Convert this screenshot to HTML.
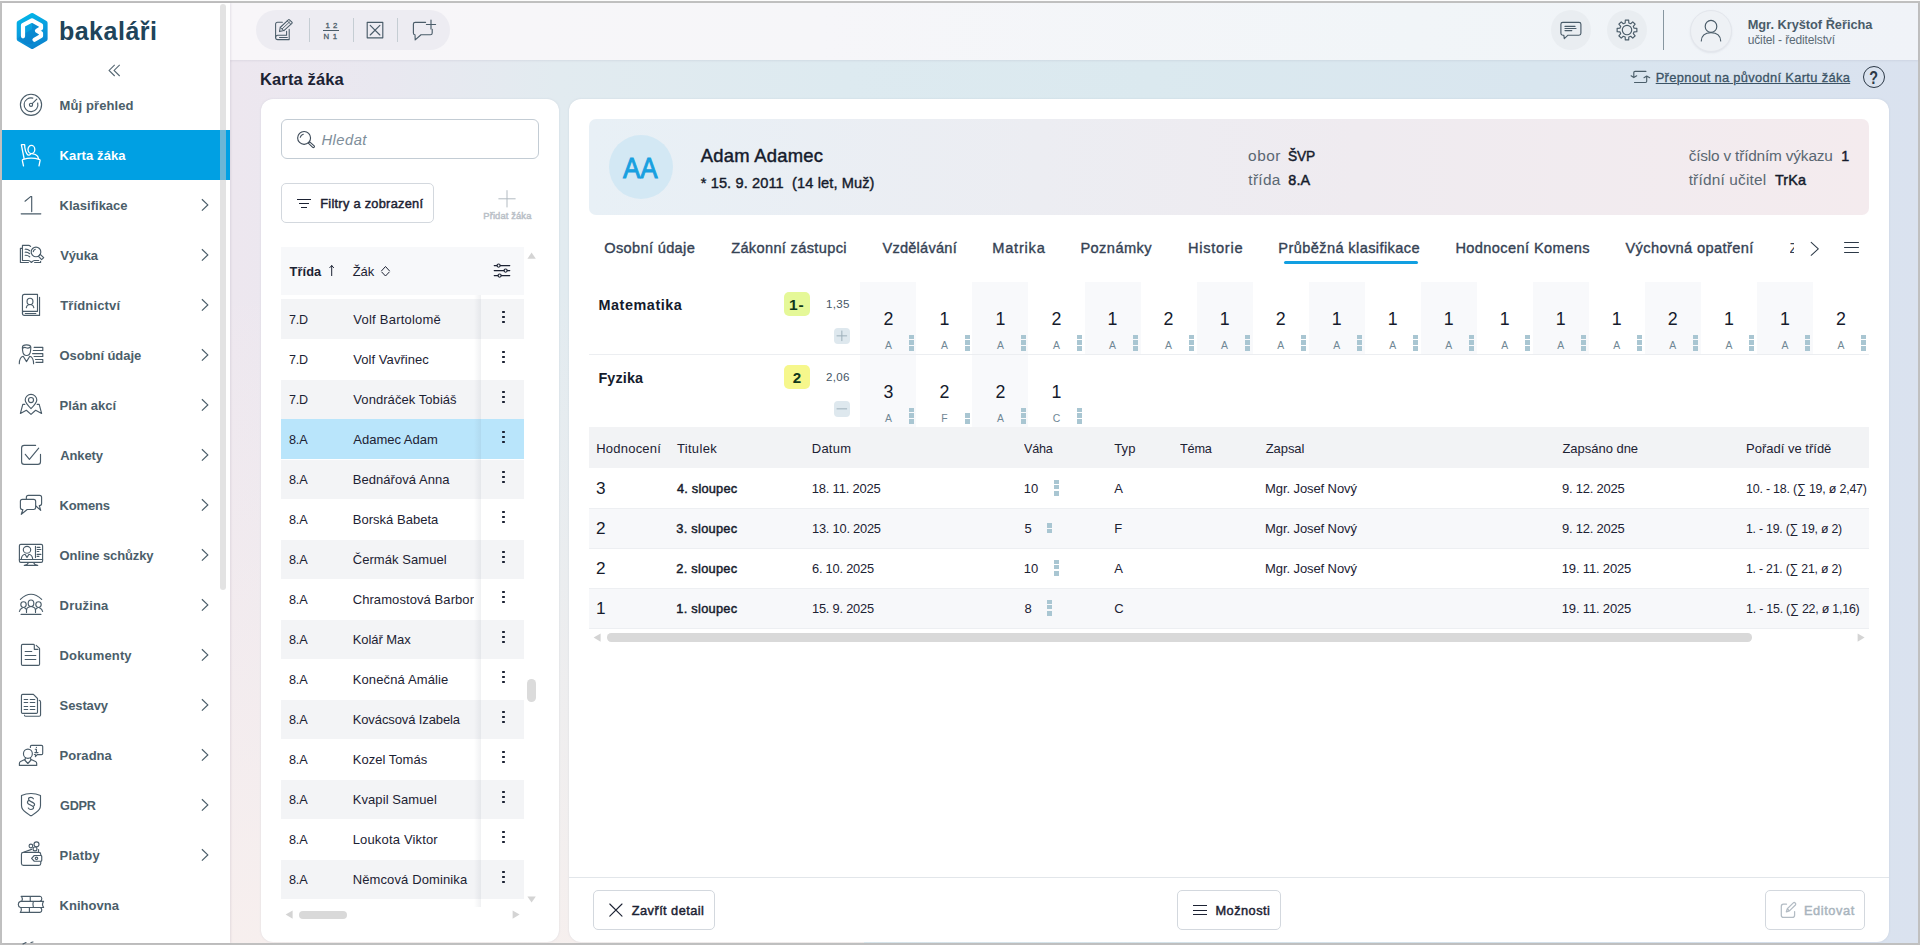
<!DOCTYPE html>
<html lang="cs"><head><meta charset="utf-8"><title>Karta žáka – Bakaláři</title>
<style>
*{box-sizing:border-box;margin:0;padding:0}
html,body{width:1920px;height:945px;overflow:hidden}
body{position:relative;font-family:"Liberation Sans",sans-serif;color:#1c2233;background:#c0c0c0}
.a{position:absolute}
.t{position:absolute;white-space:pre;line-height:20px;height:20px}
svg{position:absolute;overflow:visible}
.ic{fill:none;stroke:#4a5c69;stroke-width:1.15;stroke-linecap:round;stroke-linejoin:round}
.icw{fill:none;stroke:#fff;stroke-width:1.3;stroke-linecap:round;stroke-linejoin:round}
.btn{position:absolute;background:#fff;border:1px solid #d3d8de;border-radius:5px}

</style></head>
<body>
<div class="a" style="left:0;top:0;width:1920px;height:1px;background:#fcfcfc"></div>
<div class="a" id="bg" style="left:2px;top:3px;width:1916px;height:940px;background:linear-gradient(180deg,rgba(247,239,238,0) 0%,rgba(247,239,238,.0) 30%,rgba(248,240,238,.9) 100%) 0 0/45% 100% no-repeat,linear-gradient(90deg,#ede7ef 12%,#e9e8f0 20%,#e2ebf0 29%,#ddeaf0 44%,#dbe9ef 60%,#d9e6ef 80%,#dae2ef 100%)"></div>
<header id="app-topbar">
<div class="a" id="topbar" style="left:230px;top:3px;width:1688px;height:57px;background:linear-gradient(90deg,#f8f6f9 0%,#f6f6f9 35%,#f1f5f8 70%,#f0f3f8 100%);box-shadow:0 1px 2px rgba(120,120,150,.13)"></div>
<div class="a" style="left:256px;top:10px;width:194px;height:40px;border-radius:20px;background:#edecf2"></div>
<div class="a" style="left:309px;top:18px;width:1px;height:24px;background:#c5cdd3"></div>
<div class="a" style="left:353px;top:18px;width:1px;height:24px;background:#c5cdd3"></div>
<div class="a" style="left:397px;top:18px;width:1px;height:24px;background:#c5cdd3"></div>
<svg class="ic" style="left:271px;top:18px;stroke-width:1.05" width="24" height="24" viewBox="0 0 24 24"><path d="M11.400 4.300 H6.600 Q4.600 4.300 4.600 6.300 V19.400 Q4.600 21.600 6.800 21.600 H18.200 V11.200"/><path d="M4.600 19.400 Q4.600 17.300 6.800 17.300 H15.600 V13.300"/><path d="M8.500 19.400 H16.300"/><path d="M8.500 13.600 L9.200 9.500 L17.300 1.800 Q17.900 1.200 18.500 1.800 L20.900 4.200 Q21.500 4.800 20.900 5.400 L12.900 12.600 Z"/><path d="M9.200 9.500 L12.900 12.600 M11.100 10.900 L18.600 3.900 M16.200 2.900 L19.800 6.200" stroke-width=".9"/></svg>
<span class="t" style="left:325.57px;top:16.00px;font-size:7.8px;color:#4a5c69;letter-spacing:0.512px;-webkit-text-stroke:.3px #4a5c69;">1 2</span>
<div class="a" style="left:323px;top:29.700px;width:16.300px;height:1.100px;background:#4a5c69"></div>
<span class="t" style="left:323.57px;top:27.00px;font-size:7.8px;color:#4a5c69;letter-spacing:0.680px;-webkit-text-stroke:.3px #4a5c69;">N 1</span>
<svg class="ic" style="left:363px;top:18px;stroke-width:1.15" width="24" height="24" viewBox="0 0 24 24"><rect x="4.200" y="4.300" width="15.600" height="15.500"/><path d="M7.200 7.300 l9.700 9.700 M16.900 7.300 l-9.700 9.700"/></svg>
<svg class="ic" style="left:411px;top:18px;stroke-width:1.15" width="26" height="24" viewBox="0 0 26 24"><path d="M14.600 4.300 h-10.400 q-1.800 0-1.800 1.800 v8.800 q0 1.800 1.600 1.800 l.2 5.200 l5.800-5.200 h9.400 q1.800 0 1.800-1.800 v-3.600"/><path d="M15.400 6.500 h9.200 M20 2 v9"/></svg>
<div class="a" style="left:1551px;top:10px;width:40px;height:40px;border-radius:50%;background:#e9edf1"></div>
<div class="a" style="left:1607px;top:10px;width:40px;height:40px;border-radius:50%;background:#e9edf1"></div>
<svg class="ic" style="left:1559px;top:18px;stroke-width:1.15" width="24" height="24" viewBox="0 0 24 24"><path d="M3.800 4.300 h16.200 q1.900 0 1.900 1.900 v9.100 q0 1.900-1.900 1.900 h-11 l-3.700 3.400 l-.5-3.400 h-1 q-1.900 0-1.900-1.900 v-9.100 q0-1.900 1.900-1.900z"/><path d="M6 8.400 h10 M6 10.500 h11 M6 12.600 h6.800"/></svg>
<svg class="ic" style="left:1615px;top:18px;stroke-width:1.15" width="24" height="24" viewBox="0 0 24 24"><path d="M10.19 4.93 L10.31 2.14 L13.69 2.14 L13.81 4.93 L15.72 5.72 L17.77 3.83 L20.17 6.23 L18.28 8.28 L19.07 10.19 L21.86 10.31 L21.86 13.69 L19.07 13.81 L18.28 15.72 L20.17 17.77 L17.77 20.17 L15.72 18.28 L13.81 19.07 L13.69 21.86 L10.31 21.86 L10.19 19.07 L8.28 18.28 L6.23 20.17 L3.83 17.77 L5.72 15.72 L4.93 13.81 L2.14 13.69 L2.14 10.31 L4.93 10.19 L5.72 8.28 L3.83 6.23 L6.23 3.83 L8.28 5.72 Z" stroke-linejoin="round"/><circle cx="12" cy="12" r="4.700"/></svg>
<div class="a" style="left:1663px;top:10px;width:1px;height:40px;background:#8796a0"></div>
<div class="a" style="left:1690px;top:10px;width:42px;height:42px;border-radius:50%;background:#eef1f5;border:1px solid #e3e6ec;box-shadow:0 1px 2px rgba(100,110,130,.12)"></div>
<svg class="ic" style="left:1699px;top:18px;stroke-width:1.15" width="24" height="26" viewBox="0 0 24 26"><ellipse cx="12" cy="8.400" rx="5.800" ry="6"/><path d="M2.300 23 q.3-8.300 9.700-8.300 q9.400 0 9.700 8.300"/></svg>
<span class="t" style="left:1747.70px;top:15.00px;font-size:12.8px;font-weight:bold;color:#4a5c69;letter-spacing:-0.020px;">Mgr. Kryštof Řeřicha</span>
<span class="t" style="left:1747.74px;top:30.00px;font-size:12px;color:#5b6b76;letter-spacing:-0.142px;">učitel - ředitelství</span>
<span class="t" style="left:259.99px;top:69.00px;font-size:16.5px;font-weight:bold;letter-spacing:0.139px;">Karta žáka</span>
<svg class="ic" style="left:1630px;top:68px;stroke:#4b5e6a;stroke-width:1.15" width="22" height="18" viewBox="0 0 22 18"><path d="M15.900 3.400 H5 Q3.800 3.400 3.800 4.600 V9.400 M1.100 7.800 L3.800 9.600 L6.700 7.800"/><path d="M4.500 14.500 H15.500 Q16.700 14.500 16.700 13.300 V8.200 M14 9.700 L16.700 8 L19.700 9.700"/></svg>
<span class="t" style="left:1655.69px;top:68.00px;font-size:12.9px;color:#3b5365;letter-spacing:0.319px;text-decoration:underline;text-underline-offset:.7px;text-decoration-thickness:1px;-webkit-text-stroke:.3px #3b5365;">Přepnout na původní Kartu žáka</span>
<div class="a" style="left:1862.800px;top:65.750px;width:22.200px;height:22.200px;border-radius:50%;border:1.200px solid #2c3947"></div>
<span class="t" style="left:1868.28px;top:68.00px;font-size:18.4px;font-weight:bold;color:#2c3947;transform:scaleX(.78);transform-origin:50% 50%;">?</span>
</header>
<nav id="app-sidebar" aria-label="Hlavní menu">
<div class="a" id="sidebar" style="left:2px;top:3px;width:228px;height:940px;background:#fff;box-shadow:1px 0 2px rgba(110,100,130,.14)"></div>
<div class="a" style="left:2px;top:130px;width:228px;height:50px;background:#00a0e3"></div>
<svg style="left:12px;top:10px" width="40" height="42" viewBox="12 10 40 42"><defs><linearGradient id="lg" gradientUnits="userSpaceOnUse" x1="-6" y1="-18" x2="6" y2="18"><stop offset="0" stop-color="#00b7e9"/><stop offset=".45" stop-color="#0a9fdf"/><stop offset="1" stop-color="#0a80cc"/></linearGradient></defs>
<g transform="translate(32.150 31) scale(1 1.034)"><polygon points="0.00,-15.30 13.25,-7.65 13.25,7.65 0.00,15.30 -13.25,7.65 -13.25,-7.65" fill="url(#lg)" stroke="url(#lg)" stroke-width="4.400" stroke-linejoin="round"/></g>
<path d="M20.500 36 L32 29.300 L32 22 L38.500 26.500 L36 31 L39 35.500 L32 44 L26 44 L17.500 39z" fill="#0a74c4" opacity=".4"/>
<path d="M23 36.300 L23 25.200 L32 20.300 L41 25.300 L41 28.200 L37 30.800 L41 33.300 L41 36 L34.500 39.800" fill="none" stroke="#fff" stroke-width="4.200" stroke-linecap="round" stroke-linejoin="round"/></svg>
<span class="t" style="left:58.92px;top:21.00px;font-size:25px;font-weight:bold;color:#20445a;letter-spacing:0.511px;">bakaláři</span>
<svg class="ic" style="left:107px;top:63px;stroke:#566773;stroke-width:1.1" width="14" height="14"><path d="M7.700 1.900 L2.100 7.450 L7.700 13 M12.700 1.900 L7.100 7.450 L12.700 13" stroke-linecap="butt" stroke-linejoin="miter"/></svg>
<svg class="ic" style="left:19px;top:93px" width="24" height="24" viewBox="0 0 24 24"><circle cx="12" cy="11.8" r="10.6"/><path d="M18.7 10 A6.9 6.9 0 1 1 13.8 5.1"/><circle cx="12" cy="11.8" r="1.6"/><path d="M13.2 10.6 L17.8 6.1"/></svg>
<span class="t" style="left:59.58px;top:96.00px;font-size:13px;font-weight:bold;color:#4b5e6a;letter-spacing:0.104px;">Můj přehled</span>
<svg class="icw" style="left:19px;top:143px" width="24" height="24" viewBox="0 0 24 24"><ellipse cx="12.4" cy="6.5" rx="3.4" ry="4.1"/><path d="M5.1 15.500 L2.400 2 Q2.400 1.600 2.800 1.600 L5.300 1.600 Q5.700 1.600 5.700 2 L5.800 4.500 Q6.200 8 7.800 10.600 Q9 12.600 10.500 12 Q11.300 11.600 11.900 10.700"/><path d="M13 10.600 Q17 11 18.500 13.200 Q19.300 14.500 19.400 15.900"/><path d="M4.500 22.800 L3.300 17.400 Q3.200 16.600 4.200 16.300 Q12.200 13.800 20.200 16.300 Q21.200 16.600 21.100 17.400 L20 22.800"/></svg>
<span class="t" style="left:59.58px;top:146.00px;font-size:13px;font-weight:bold;color:#fff;letter-spacing:0.105px;">Karta žáka</span>
<svg class="ic" style="left:19px;top:193px" width="24" height="24" viewBox="0 0 24 24"><path d="M6 8.200 l5.6-4.600 h1.100 v15"/><path d="M2.200 20.800 h19.600"/></svg>
<span class="t" style="left:59.58px;top:196.00px;font-size:13px;font-weight:bold;color:#4b5e6a;letter-spacing:0.006px;">Klasifikace</span>
<svg class="ic" style="left:199px;top:195px;stroke:#4b5e6a;stroke-width:1.2" width="12" height="20"><path d="M2.900 4.200 L8.800 9.900 L2.900 15.600" stroke-linecap="butt" stroke-linejoin="miter"/></svg>
<svg class="ic" style="left:19px;top:243px" width="24" height="24" viewBox="0 0 24 24"><path d="M3.300 5.300 H1.400 V19.500 H9.400 M15.600 19.500 H21.600 V18.200"/><path d="M11.600 3.500 Q10.800 2.400 9.600 2.400 H3.450 V17.500 H9.300 Q10.600 17.500 12.400 19.500 Q14.200 17.500 15.500 17.500 H19.700"/><path d="M6.200 6.200 Q8.600 6 10.700 7.700 M6.200 9.200 Q8.600 9 10.700 10.700 M6.200 12.300 Q8.600 12.100 10.700 13.800"/><circle cx="17" cy="8.900" r="4.800"/><path d="M14.300 8.600 A2.900 2.900 0 0 1 16.300 6.300"/><path d="M20.300 12.400 L21.200 11.400 L24.700 14.600 L22.600 16.600 L19.500 13.400"/></svg>
<span class="t" style="left:60.23px;top:246.00px;font-size:13px;font-weight:bold;color:#4b5e6a;letter-spacing:-0.133px;">Výuka</span>
<svg class="ic" style="left:199px;top:245px;stroke:#4b5e6a;stroke-width:1.2" width="12" height="20"><path d="M2.900 4.200 L8.800 9.900 L2.900 15.600" stroke-linecap="butt" stroke-linejoin="miter"/></svg>
<svg class="ic" style="left:19px;top:293px" width="24" height="24" viewBox="0 0 24 24"><path d="M4.100 18.350 H18.500 V1.400 H5.400 Q3.450 1.400 3.450 3.400 V20.300 Q3.450 22.400 5.300 22.400 H20.550 V4.300"/><path d="M4.100 18.350 Q3.450 18.900 3.450 20.300"/><path d="M6.300 20.450 H16.800"/><ellipse cx="11" cy="8.400" rx="2.950" ry="3.200"/><path d="M7.350 14.600 Q7.600 12.400 9.600 11.800 M14.800 14.600 Q14.500 12.400 12.500 11.800"/></svg>
<span class="t" style="left:60.23px;top:296.00px;font-size:13px;font-weight:bold;color:#4b5e6a;letter-spacing:0.143px;">Třídnictví</span>
<svg class="ic" style="left:199px;top:295px;stroke:#4b5e6a;stroke-width:1.2" width="12" height="20"><path d="M2.900 4.200 L8.800 9.900 L2.900 15.600" stroke-linecap="butt" stroke-linejoin="miter"/></svg>
<svg class="ic" style="left:19px;top:343px" width="24" height="24" viewBox="0 0 24 24"><path d="M3.400 4.600 Q3.400 1.900 7.500 1.900 Q11.800 1.900 11.800 4.600 L11.600 7.500 Q11.200 12.500 7.600 12.500 Q4 12.500 3.600 7.500 Z"/><path d="M3.700 5.200 Q5.500 3.600 7.200 4.800 Q9 5.800 11.600 4"/><path d="M.3 20.700 Q.5 14 4.200 13.300 L7.500 18.600 L10.800 13.300 Q14.400 14 14.600 20.700"/><path d="M15.100 4.300 H23.800 V7.500 H14.300 M13.600 10.550 H23.800 V13.450 H15.100 M16.500 16.500 H23.800 V19.400 H17"/></svg>
<span class="t" style="left:59.58px;top:346.00px;font-size:13px;font-weight:bold;color:#4b5e6a;letter-spacing:-0.070px;">Osobní údaje</span>
<svg class="ic" style="left:199px;top:345px;stroke:#4b5e6a;stroke-width:1.2" width="12" height="20"><path d="M2.900 4.200 L8.800 9.900 L2.900 15.600" stroke-linecap="butt" stroke-linejoin="miter"/></svg>
<svg class="ic" style="left:19px;top:393px" width="24" height="24" viewBox="0 0 24 24"><path d="M12 15.600 Q6.200 9.800 6.200 7 A5.800 5.600 0 0 1 17.800 7 Q17.800 9.800 12 15.600 Z"/><circle cx="12" cy="7" r="2.550"/><path d="M5.800 11.400 H3.800 L1.400 20.400 L7.350 17.300 L12 21.400 L16.650 17.300 L22.600 20.400 L20.200 11.400 H18.200"/></svg>
<span class="t" style="left:59.58px;top:396.00px;font-size:13px;font-weight:bold;color:#4b5e6a;letter-spacing:0.025px;">Plán akcí</span>
<svg class="ic" style="left:199px;top:395px;stroke:#4b5e6a;stroke-width:1.2" width="12" height="20"><path d="M2.900 4.200 L8.800 9.900 L2.900 15.600" stroke-linecap="butt" stroke-linejoin="miter"/></svg>
<svg class="ic" style="left:19px;top:443px" width="24" height="24" viewBox="0 0 24 24"><path d="M16.600 2.400 H5.200 Q2.600 2.400 2.600 5 V18.800 Q2.600 21.400 5.200 21.400 H18.900 Q21.500 21.400 21.500 18.800 V11.200"/><path d="M6.300 11.300 L10.400 16.400 L19.700 5.200"/></svg>
<span class="t" style="left:60.23px;top:446.00px;font-size:13px;font-weight:bold;color:#4b5e6a;letter-spacing:-0.105px;">Ankety</span>
<svg class="ic" style="left:199px;top:445px;stroke:#4b5e6a;stroke-width:1.2" width="12" height="20"><path d="M2.900 4.200 L8.800 9.900 L2.900 15.600" stroke-linecap="butt" stroke-linejoin="miter"/></svg>
<svg class="ic" style="left:19px;top:493px" width="24" height="24" viewBox="0 0 24 24"><path d="M7.350 5.800 V4.400 Q7.350 2.400 9.350 2.400 H20.600 Q22.600 2.400 22.600 4.400 V10.600 Q22.600 12.600 20.600 12.600 H20.300 L21.700 17.400 L16.900 13"/><path d="M3.400 6.300 H14.650 Q16.650 6.300 16.650 8.300 V14.500 Q16.650 16.500 14.650 16.500 H8.200 L2.300 21.300 L3.900 16.500 H3.400 Q1.400 16.500 1.400 14.500 V8.300 Q1.400 6.300 3.400 6.300 Z"/></svg>
<span class="t" style="left:59.58px;top:496.00px;font-size:13px;font-weight:bold;color:#4b5e6a;letter-spacing:-0.166px;">Komens</span>
<svg class="ic" style="left:199px;top:495px;stroke:#4b5e6a;stroke-width:1.2" width="12" height="20"><path d="M2.900 4.200 L8.800 9.900 L2.900 15.600" stroke-linecap="butt" stroke-linejoin="miter"/></svg>
<svg class="ic" style="left:19px;top:543px" width="24" height="24" viewBox="0 0 24 24"><rect x=".4" y="1.400" width="23.200" height="17.950" rx="1.400"/><path d="M.4 16.500 H23.600"/><path d="M9.550 19.500 Q8.600 21.800 5.500 22.400 M14.450 19.500 Q15.400 21.800 18.500 22.400 M5.300 22.400 H18.700"/><ellipse cx="8" cy="6.750" rx="3.700" ry="3.450"/><path d="M2.300 16.400 Q2.400 12 6 11.200 L8 14.400 L10 11.200 Q13.600 12 13.700 16.400"/><path d="M16.500 3.300 V14.600 M18.200 4.400 H20.900 M18.200 6.500 H21.900 M18.200 8.500 H19.900 M18.200 11.400 H21.900 M18.200 13.400 H19.900"/></svg>
<span class="t" style="left:59.58px;top:546.00px;font-size:13px;font-weight:bold;color:#4b5e6a;letter-spacing:-0.107px;">Online schůzky</span>
<svg class="ic" style="left:199px;top:545px;stroke:#4b5e6a;stroke-width:1.2" width="12" height="20"><path d="M2.900 4.200 L8.800 9.900 L2.900 15.600" stroke-linecap="butt" stroke-linejoin="miter"/></svg>
<svg class="ic" style="left:19px;top:593px" width="24" height="24" viewBox="0 0 24 24"><path d="M1.400 6.300 Q12 -3.800 22.700 6.300"/><path d="M2.100 21.400 H21.900"/><ellipse cx="12" cy="10.300" rx="2.800" ry="3.300"/><path d="M7.500 19.400 V17 Q7.600 14.600 10.300 14 M16.500 19.400 V17 Q16.400 14.600 13.700 14"/><ellipse cx="4.500" cy="11.600" rx="2.700" ry="2.900"/><path d="M.4 18.500 Q.8 16 3.300 15 M5.700 15 Q6.800 15.400 7.500 16.600"/><ellipse cx="19.500" cy="11.600" rx="2.700" ry="2.900"/><path d="M23.600 18.500 Q23.200 16 20.700 15 M18.300 15 Q17.200 15.400 16.500 16.600"/></svg>
<span class="t" style="left:59.58px;top:596.00px;font-size:13px;font-weight:bold;color:#4b5e6a;letter-spacing:0.175px;">Družina</span>
<svg class="ic" style="left:199px;top:595px;stroke:#4b5e6a;stroke-width:1.2" width="12" height="20"><path d="M2.900 4.200 L8.800 9.900 L2.900 15.600" stroke-linecap="butt" stroke-linejoin="miter"/></svg>
<svg class="ic" style="left:19px;top:643px" width="24" height="24" viewBox="0 0 24 24"><path d="M20.550 5.400 V21.200 Q20.550 22.400 19.350 22.400 H3.650 Q2.450 22.400 2.450 21.200 V2.600 Q2.450 1.400 3.650 1.400 H14.500 Q15.300 1.400 15.300 2.200 V6.300 H19 M17.200 2.300 L20.550 5.400"/><path d="M6.150 8.450 H12.750 M6.150 12.500 H16.800 M6.150 16.500 H16.800"/></svg>
<span class="t" style="left:59.58px;top:646.00px;font-size:13px;font-weight:bold;color:#4b5e6a;letter-spacing:0.154px;">Dokumenty</span>
<svg class="ic" style="left:199px;top:645px;stroke:#4b5e6a;stroke-width:1.2" width="12" height="20"><path d="M2.900 4.200 L8.800 9.900 L2.900 15.600" stroke-linecap="butt" stroke-linejoin="miter"/></svg>
<svg class="ic" style="left:19px;top:693px" width="24" height="24" viewBox="0 0 24 24"><path d="M3.650 1.400 H14.400 L18.500 5.500 V19.200 Q18.500 20.400 17.300 20.400 H3.650 Q2.450 20.400 2.450 19.200 V2.600 Q2.450 1.400 3.650 1.400Z"/><path d="M20.200 7.300 Q21.550 7.600 21.550 9 V22 Q21.550 23.250 20.300 23.250 H6.900 Q5.600 23.250 5.500 22.200"/><path d="M5.150 6.500 H8.700 M11.250 6.500 H15.800 M5.150 9.500 H8.700 M11.250 9.500 H15.800 M5.150 13.500 H8.700 M11.250 13.500 H15.800 M5.150 16.500 H8.700 M11.250 16.500 H15.800"/></svg>
<span class="t" style="left:59.58px;top:696.00px;font-size:13px;font-weight:bold;color:#4b5e6a;letter-spacing:-0.111px;">Sestavy</span>
<svg class="ic" style="left:199px;top:695px;stroke:#4b5e6a;stroke-width:1.2" width="12" height="20"><path d="M2.900 4.200 L8.800 9.900 L2.900 15.600" stroke-linecap="butt" stroke-linejoin="miter"/></svg>
<svg class="ic" style="left:19px;top:743px" width="24" height="24" viewBox="0 0 24 24"><ellipse cx="8.900" cy="10.700" rx="4.450" ry="4.600"/><path d="M6.300 14.500 V16.200 L1.600 18.600 Q.4 19.200 .4 20.600 V22.400 H17.700 V20.600 Q17.700 19.200 16.500 18.600 L11.600 16.200 V14.500"/><path d="M5.700 17 L8.850 20.500 L12 17"/><path d="M11.400 4.500 V3.600 Q11.400 2.400 12.600 2.400 H22.500 Q23.700 2.400 23.700 3.600 V10.400 Q23.700 11.600 22.500 11.600 H18.300 L16.400 13.600 L16.600 11.800 L15.300 11.500"/><path d="M16.300 6.200 H17.400 V9.500 M15.900 9.600 H19 M17.400 4.200 V4.400"/></svg>
<span class="t" style="left:59.58px;top:746.00px;font-size:13px;font-weight:bold;color:#4b5e6a;letter-spacing:0.041px;">Poradna</span>
<svg class="ic" style="left:199px;top:745px;stroke:#4b5e6a;stroke-width:1.2" width="12" height="20"><path d="M2.900 4.200 L8.800 9.900 L2.900 15.600" stroke-linecap="butt" stroke-linejoin="miter"/></svg>
<svg class="ic" style="left:19px;top:793px" width="24" height="24" viewBox="0 0 24 24"><path d="M12 .5 Q7 .5 2.500 2.500 V12.500 Q2.500 16.500 7 19.500 L11 22.400 Q12 23 13 22.400 L17 19.500 Q21.500 16.500 21.500 12.500 V2.500 Q17 .5 12 .5Z"/><path d="M14.400 5.800 Q13.600 4.300 11.900 4.300 Q9.500 4.300 9.500 6.100 Q9.500 7.600 12 8.600 Q15.600 10 15.600 11.600 Q15.600 12.900 14.200 13.200"/><path d="M9.300 15 Q10.100 16.500 11.900 16.500 Q14.600 16.500 14.600 14.600 Q14.600 13.200 12 12.200 Q8.400 10.800 8.400 9.200 Q8.400 7.900 9.800 7.600"/></svg>
<span class="t" style="left:59.58px;top:796.00px;font-size:13px;font-weight:bold;color:#4b5e6a;letter-spacing:-0.220px;transform:scaleX(0.9732);transform-origin:0 0;">GDPR</span>
<svg class="ic" style="left:199px;top:795px;stroke:#4b5e6a;stroke-width:1.2" width="12" height="20"><path d="M2.900 4.200 L8.800 9.900 L2.900 15.600" stroke-linecap="butt" stroke-linejoin="miter"/></svg>
<svg class="ic" style="left:19px;top:843px" width="24" height="24" viewBox="0 0 24 24"><rect x="2.450" y="9.300" width="19.300" height="13" rx="1.900"/><path d="M15.300 12.500 H21.800 Q22.750 12.500 22.750 13.400 V17.300 Q22.750 18.250 21.800 18.250 H15.300 L12.600 15.350 Z" fill="#fff"/><circle cx="17.500" cy="15.350" r="1.250"/><path d="M5.150 8.950 L12.600 6.400 M19.550 6.550 V8.600"/><circle cx="11.900" cy="3" r="1.850"/><circle cx="17.500" cy="1.300" r="2.500"/><circle cx="16" cy="5.900" r="1.950" fill="#fff"/></svg>
<span class="t" style="left:59.58px;top:846.00px;font-size:13px;font-weight:bold;color:#4b5e6a;letter-spacing:0.227px;">Platby</span>
<svg class="ic" style="left:199px;top:845px;stroke:#4b5e6a;stroke-width:1.2" width="12" height="20"><path d="M2.900 4.200 L8.800 9.900 L2.900 15.600" stroke-linecap="butt" stroke-linejoin="miter"/></svg>
<svg class="ic" style="left:19px;top:893px" width="24" height="24" viewBox="0 0 24 24"><path d="M2.100 3.300 H21 Q22.800 3.600 22.800 5.800 Q22.800 8 21 8.350 M2.600 3.400 Q4 5.800 2.800 8.300 M11.250 3.300 V8.350"/><path d="M24.600 8.350 H1.400 Q-.7 9 -.7 11.400 Q-.7 13.800 1.400 14.450 H24.600 M24.600 8.350 Q22.400 11.400 24.600 14.450 M14.400 8.350 Q13.300 11.400 14.400 14.450"/><path d="M1.200 19.350 H21 Q22.800 19 22.800 17 Q22.800 14.900 21 14.500 M1.500 19.300 Q3 17 2 14.500 M10.400 14.450 V19.350"/></svg>
<span class="t" style="left:59.58px;top:896.00px;font-size:13px;font-weight:bold;color:#4b5e6a;letter-spacing:0.021px;">Knihovna</span>
<svg class="ic" style="left:19px;top:941px" width="24" height="24" viewBox="0 0 24 24"><path d="M4 3 l3-1.500 M12 1.500 l2-.5"/></svg>
<div class="a" style="left:220px;top:4px;width:6px;height:586px;border-radius:3px;background:rgba(202,202,202,.53)"></div>
</nav>
<aside id="pupil-list">
<div class="a" id="lpanel" style="left:261px;top:99px;width:298px;height:843px;border-radius:12px;background:#fff;box-shadow:0 0 2px rgba(140,150,170,.25)"></div>
<div class="a" style="left:281px;top:119px;width:258px;height:40px;border-radius:6px;border:1px solid #c3ccd4;background:#fff"></div>
<svg class="ic" style="left:295px;top:130px;stroke:#3d4a58;stroke-width:1.1" width="22" height="20" viewBox="0 0 22 20"><circle cx="9.100" cy="7.900" r="6.450"/><path d="M5.300 7.300 a3.900 3.900 0 0 1 3-3.100"/><path d="M13.300 13.200 l1.400-1.400 l4.500 4.100 q.6.700-.1 1.400 q-.7.600-1.400 0z"/></svg>
<span class="t" style="left:321.49px;top:130.00px;font-size:14.8px;font-style:italic;color:#7e8e9a;letter-spacing:0.433px;">Hledat</span>
<div class="btn" style="left:281px;top:183px;width:152.600px;height:39.600px"></div>
<div class="a" style="left:297px;top:198.800px;width:14px;height:1.200px;background:#1c2233"></div>
<div class="a" style="left:299.300px;top:203px;width:9.500px;height:1.200px;background:#1c2233"></div>
<div class="a" style="left:301px;top:206.900px;width:5.800px;height:1.200px;background:#1c2233"></div>
<span class="t" style="left:320.20px;top:194.00px;font-size:12.8px;letter-spacing:0.279px;-webkit-text-stroke:.45px currentColor;">Filtry a zobrazení</span>
<svg class="ic" style="left:498px;top:190px;stroke:#b3bbc2;stroke-width:1" width="18" height="18"><path d="M9 .6 v16.400 M.8 8.800 h16.400"/></svg>
<span class="t" style="left:483.28px;top:206.00px;font-size:9.4px;color:#b9c0c7;letter-spacing:0.121px;-webkit-text-stroke:.45px currentColor;">Přidat žáka</span>
<div class="a" style="left:281px;top:247px;width:243px;height:48px;background:#f7f8fa"></div>
<span class="t" style="left:289.44px;top:262.00px;font-size:12.8px;font-weight:bold;letter-spacing:0.129px;">Třída</span>
<svg class="ic" style="left:327px;top:264px;stroke:#1c2233;stroke-width:1" width="10" height="14"><path d="M4.700 1.600 v10 M2.800 3.600 l1.900-2 l1.900 2"/></svg>
<span class="t" style="left:352.69px;top:262.00px;font-size:13px;letter-spacing:-0.064px;">Žák</span>
<svg class="ic" style="left:380px;top:265px;stroke:#1c2233;stroke-width:1" width="12" height="14"><path d="M1.700 5.700 L5.500 1.500 L9.300 5.700 M1.700 7 L5.500 11 L9.300 7"/></svg>
<svg class="ic" style="left:493px;top:263px;stroke:#1c2233;stroke-width:1.100" width="18" height="16"><path d="M1.200 2.600 h2.800 M7.200 2.600 h9.600 M1.200 7.600 h9.800 M14.200 7.600 h2.600 M1.200 12.600 h3.800 M8.200 12.600 h8.600"/><circle cx="5.600" cy="2.600" r="1.600"/><circle cx="12.600" cy="7.600" r="1.600"/><circle cx="6.600" cy="12.600" r="1.600"/></svg>
<div class="a" style="left:281px;top:299px;width:243px;height:40px;background:#f3f4f6"></div>
<span class="t" style="left:289.44px;top:310.00px;font-size:13px;letter-spacing:-0.220px;transform:scaleX(0.9630);transform-origin:0 0;">7.D</span>
<span class="t" style="left:353.33px;top:310.00px;font-size:13px;letter-spacing:0.229px;">Volf Bartolomě</span>
<div class="a" style="left:474px;top:299px;width:7px;height:40px;background:linear-gradient(90deg,rgba(90,100,120,0),rgba(90,100,120,.09))"></div>
<div class="a" style="left:502.300px;top:310.8px;width:2.400px;height:2.400px;border-radius:.7px;background:#1c2233"></div>
<div class="a" style="left:502.300px;top:315.8px;width:2.400px;height:2.400px;border-radius:.7px;background:#1c2233"></div>
<div class="a" style="left:502.300px;top:320.8px;width:2.400px;height:2.400px;border-radius:.7px;background:#1c2233"></div>
<div class="a" style="left:281px;top:339px;width:243px;height:40px;background:#fff"></div>
<span class="t" style="left:289.44px;top:350.00px;font-size:13px;letter-spacing:-0.220px;transform:scaleX(0.9630);transform-origin:0 0;">7.D</span>
<span class="t" style="left:353.33px;top:350.00px;font-size:13px;letter-spacing:0.048px;">Volf Vavřinec</span>
<div class="a" style="left:474px;top:339px;width:7px;height:40px;background:linear-gradient(90deg,rgba(90,100,120,0),rgba(90,100,120,.09))"></div>
<div class="a" style="left:502.300px;top:350.8px;width:2.400px;height:2.400px;border-radius:.7px;background:#1c2233"></div>
<div class="a" style="left:502.300px;top:355.8px;width:2.400px;height:2.400px;border-radius:.7px;background:#1c2233"></div>
<div class="a" style="left:502.300px;top:360.8px;width:2.400px;height:2.400px;border-radius:.7px;background:#1c2233"></div>
<div class="a" style="left:281px;top:380px;width:243px;height:39px;background:#f3f4f6"></div>
<span class="t" style="left:289.44px;top:390.00px;font-size:13px;letter-spacing:-0.220px;transform:scaleX(0.9630);transform-origin:0 0;">7.D</span>
<span class="t" style="left:353.33px;top:390.00px;font-size:13px;letter-spacing:0.060px;">Vondráček Tobiáš</span>
<div class="a" style="left:474px;top:379px;width:7px;height:40px;background:linear-gradient(90deg,rgba(90,100,120,0),rgba(90,100,120,.09))"></div>
<div class="a" style="left:502.300px;top:390.8px;width:2.400px;height:2.400px;border-radius:.7px;background:#1c2233"></div>
<div class="a" style="left:502.300px;top:395.8px;width:2.400px;height:2.400px;border-radius:.7px;background:#1c2233"></div>
<div class="a" style="left:502.300px;top:400.8px;width:2.400px;height:2.400px;border-radius:.7px;background:#1c2233"></div>
<div class="a" style="left:281px;top:419px;width:243px;height:40px;background:#b9e5fb"></div>
<span class="t" style="left:288.79px;top:430.00px;font-size:13px;letter-spacing:-0.220px;transform:scaleX(0.9748);transform-origin:0 0;">8.A</span>
<span class="t" style="left:353.33px;top:430.00px;font-size:13px;letter-spacing:-0.009px;">Adamec Adam</span>
<div class="a" style="left:474px;top:419px;width:7px;height:40px;background:linear-gradient(90deg,rgba(90,100,120,0),rgba(90,100,120,.09))"></div>
<div class="a" style="left:502.300px;top:430.8px;width:2.400px;height:2.400px;border-radius:.7px;background:#1c2233"></div>
<div class="a" style="left:502.300px;top:435.8px;width:2.400px;height:2.400px;border-radius:.7px;background:#1c2233"></div>
<div class="a" style="left:502.300px;top:440.8px;width:2.400px;height:2.400px;border-radius:.7px;background:#1c2233"></div>
<div class="a" style="left:281px;top:460px;width:243px;height:39px;background:#f3f4f6"></div>
<span class="t" style="left:288.79px;top:470.00px;font-size:13px;letter-spacing:-0.220px;transform:scaleX(0.9748);transform-origin:0 0;">8.A</span>
<span class="t" style="left:352.69px;top:470.00px;font-size:13px;letter-spacing:0.054px;">Bednářová Anna</span>
<div class="a" style="left:474px;top:459px;width:7px;height:40px;background:linear-gradient(90deg,rgba(90,100,120,0),rgba(90,100,120,.09))"></div>
<div class="a" style="left:502.300px;top:470.8px;width:2.400px;height:2.400px;border-radius:.7px;background:#1c2233"></div>
<div class="a" style="left:502.300px;top:475.8px;width:2.400px;height:2.400px;border-radius:.7px;background:#1c2233"></div>
<div class="a" style="left:502.300px;top:480.8px;width:2.400px;height:2.400px;border-radius:.7px;background:#1c2233"></div>
<div class="a" style="left:281px;top:499px;width:243px;height:40px;background:#fff"></div>
<span class="t" style="left:288.79px;top:510.00px;font-size:13px;letter-spacing:-0.220px;transform:scaleX(0.9748);transform-origin:0 0;">8.A</span>
<span class="t" style="left:352.69px;top:510.00px;font-size:13px;letter-spacing:0.032px;">Borská Babeta</span>
<div class="a" style="left:474px;top:499px;width:7px;height:40px;background:linear-gradient(90deg,rgba(90,100,120,0),rgba(90,100,120,.09))"></div>
<div class="a" style="left:502.300px;top:510.8px;width:2.400px;height:2.400px;border-radius:.7px;background:#1c2233"></div>
<div class="a" style="left:502.300px;top:515.8px;width:2.400px;height:2.400px;border-radius:.7px;background:#1c2233"></div>
<div class="a" style="left:502.300px;top:520.8px;width:2.400px;height:2.400px;border-radius:.7px;background:#1c2233"></div>
<div class="a" style="left:281px;top:540px;width:243px;height:39px;background:#f3f4f6"></div>
<span class="t" style="left:288.79px;top:550.00px;font-size:13px;letter-spacing:-0.220px;transform:scaleX(0.9748);transform-origin:0 0;">8.A</span>
<span class="t" style="left:352.69px;top:550.00px;font-size:13px;letter-spacing:0.061px;">Čermák Samuel</span>
<div class="a" style="left:474px;top:539px;width:7px;height:40px;background:linear-gradient(90deg,rgba(90,100,120,0),rgba(90,100,120,.09))"></div>
<div class="a" style="left:502.300px;top:550.8px;width:2.400px;height:2.400px;border-radius:.7px;background:#1c2233"></div>
<div class="a" style="left:502.300px;top:555.8px;width:2.400px;height:2.400px;border-radius:.7px;background:#1c2233"></div>
<div class="a" style="left:502.300px;top:560.8px;width:2.400px;height:2.400px;border-radius:.7px;background:#1c2233"></div>
<div class="a" style="left:281px;top:579px;width:243px;height:40px;background:#fff"></div>
<span class="t" style="left:288.79px;top:590.00px;font-size:13px;letter-spacing:-0.220px;transform:scaleX(0.9748);transform-origin:0 0;">8.A</span>
<div class="a" style="left:340px;top:579px;width:133.500px;height:40px;overflow:hidden">
<span class="t" style="left:12.69px;top:11.00px;font-size:13px;letter-spacing:0.080px;">Chramostová Barbora</span>
</div>
<div class="a" style="left:474px;top:579px;width:7px;height:40px;background:linear-gradient(90deg,rgba(90,100,120,0),rgba(90,100,120,.09))"></div>
<div class="a" style="left:502.300px;top:590.8px;width:2.400px;height:2.400px;border-radius:.7px;background:#1c2233"></div>
<div class="a" style="left:502.300px;top:595.8px;width:2.400px;height:2.400px;border-radius:.7px;background:#1c2233"></div>
<div class="a" style="left:502.300px;top:600.8px;width:2.400px;height:2.400px;border-radius:.7px;background:#1c2233"></div>
<div class="a" style="left:281px;top:620px;width:243px;height:39px;background:#f3f4f6"></div>
<span class="t" style="left:288.79px;top:630.00px;font-size:13px;letter-spacing:-0.220px;transform:scaleX(0.9748);transform-origin:0 0;">8.A</span>
<span class="t" style="left:352.69px;top:630.00px;font-size:13px;letter-spacing:-0.072px;">Kolář Max</span>
<div class="a" style="left:474px;top:619px;width:7px;height:40px;background:linear-gradient(90deg,rgba(90,100,120,0),rgba(90,100,120,.09))"></div>
<div class="a" style="left:502.300px;top:630.8px;width:2.400px;height:2.400px;border-radius:.7px;background:#1c2233"></div>
<div class="a" style="left:502.300px;top:635.8px;width:2.400px;height:2.400px;border-radius:.7px;background:#1c2233"></div>
<div class="a" style="left:502.300px;top:640.8px;width:2.400px;height:2.400px;border-radius:.7px;background:#1c2233"></div>
<div class="a" style="left:281px;top:659px;width:243px;height:40px;background:#fff"></div>
<span class="t" style="left:288.79px;top:670.00px;font-size:13px;letter-spacing:-0.220px;transform:scaleX(0.9748);transform-origin:0 0;">8.A</span>
<span class="t" style="left:352.69px;top:670.00px;font-size:13px;letter-spacing:0.125px;">Konečná Amálie</span>
<div class="a" style="left:474px;top:659px;width:7px;height:40px;background:linear-gradient(90deg,rgba(90,100,120,0),rgba(90,100,120,.09))"></div>
<div class="a" style="left:502.300px;top:670.8px;width:2.400px;height:2.400px;border-radius:.7px;background:#1c2233"></div>
<div class="a" style="left:502.300px;top:675.8px;width:2.400px;height:2.400px;border-radius:.7px;background:#1c2233"></div>
<div class="a" style="left:502.300px;top:680.8px;width:2.400px;height:2.400px;border-radius:.7px;background:#1c2233"></div>
<div class="a" style="left:281px;top:700px;width:243px;height:39px;background:#f3f4f6"></div>
<span class="t" style="left:288.79px;top:710.00px;font-size:13px;letter-spacing:-0.220px;transform:scaleX(0.9748);transform-origin:0 0;">8.A</span>
<span class="t" style="left:352.69px;top:710.00px;font-size:13px;letter-spacing:-0.107px;">Kovácsová Izabela</span>
<div class="a" style="left:474px;top:699px;width:7px;height:40px;background:linear-gradient(90deg,rgba(90,100,120,0),rgba(90,100,120,.09))"></div>
<div class="a" style="left:502.300px;top:710.8px;width:2.400px;height:2.400px;border-radius:.7px;background:#1c2233"></div>
<div class="a" style="left:502.300px;top:715.8px;width:2.400px;height:2.400px;border-radius:.7px;background:#1c2233"></div>
<div class="a" style="left:502.300px;top:720.8px;width:2.400px;height:2.400px;border-radius:.7px;background:#1c2233"></div>
<div class="a" style="left:281px;top:739px;width:243px;height:40px;background:#fff"></div>
<span class="t" style="left:288.79px;top:750.00px;font-size:13px;letter-spacing:-0.220px;transform:scaleX(0.9748);transform-origin:0 0;">8.A</span>
<span class="t" style="left:352.69px;top:750.00px;font-size:13px;letter-spacing:0.037px;">Kozel Tomás</span>
<div class="a" style="left:474px;top:739px;width:7px;height:40px;background:linear-gradient(90deg,rgba(90,100,120,0),rgba(90,100,120,.09))"></div>
<div class="a" style="left:502.300px;top:750.8px;width:2.400px;height:2.400px;border-radius:.7px;background:#1c2233"></div>
<div class="a" style="left:502.300px;top:755.8px;width:2.400px;height:2.400px;border-radius:.7px;background:#1c2233"></div>
<div class="a" style="left:502.300px;top:760.8px;width:2.400px;height:2.400px;border-radius:.7px;background:#1c2233"></div>
<div class="a" style="left:281px;top:780px;width:243px;height:39px;background:#f3f4f6"></div>
<span class="t" style="left:288.79px;top:790.00px;font-size:13px;letter-spacing:-0.220px;transform:scaleX(0.9748);transform-origin:0 0;">8.A</span>
<span class="t" style="left:352.69px;top:790.00px;font-size:13px;letter-spacing:0.084px;">Kvapil Samuel</span>
<div class="a" style="left:474px;top:779px;width:7px;height:40px;background:linear-gradient(90deg,rgba(90,100,120,0),rgba(90,100,120,.09))"></div>
<div class="a" style="left:502.300px;top:790.8px;width:2.400px;height:2.400px;border-radius:.7px;background:#1c2233"></div>
<div class="a" style="left:502.300px;top:795.8px;width:2.400px;height:2.400px;border-radius:.7px;background:#1c2233"></div>
<div class="a" style="left:502.300px;top:800.8px;width:2.400px;height:2.400px;border-radius:.7px;background:#1c2233"></div>
<div class="a" style="left:281px;top:819px;width:243px;height:40px;background:#fff"></div>
<span class="t" style="left:288.79px;top:830.00px;font-size:13px;letter-spacing:-0.220px;transform:scaleX(0.9748);transform-origin:0 0;">8.A</span>
<span class="t" style="left:352.69px;top:830.00px;font-size:13px;letter-spacing:0.165px;">Loukota Viktor</span>
<div class="a" style="left:474px;top:819px;width:7px;height:40px;background:linear-gradient(90deg,rgba(90,100,120,0),rgba(90,100,120,.09))"></div>
<div class="a" style="left:502.300px;top:830.8px;width:2.400px;height:2.400px;border-radius:.7px;background:#1c2233"></div>
<div class="a" style="left:502.300px;top:835.8px;width:2.400px;height:2.400px;border-radius:.7px;background:#1c2233"></div>
<div class="a" style="left:502.300px;top:840.8px;width:2.400px;height:2.400px;border-radius:.7px;background:#1c2233"></div>
<div class="a" style="left:281px;top:860px;width:243px;height:39px;background:#f3f4f6"></div>
<span class="t" style="left:288.79px;top:870.00px;font-size:13px;letter-spacing:-0.220px;transform:scaleX(0.9748);transform-origin:0 0;">8.A</span>
<span class="t" style="left:352.69px;top:870.00px;font-size:13px;letter-spacing:0.119px;">Němcová Dominika</span>
<div class="a" style="left:474px;top:859px;width:7px;height:40px;background:linear-gradient(90deg,rgba(90,100,120,0),rgba(90,100,120,.09))"></div>
<div class="a" style="left:502.300px;top:870.8px;width:2.400px;height:2.400px;border-radius:.7px;background:#1c2233"></div>
<div class="a" style="left:502.300px;top:875.8px;width:2.400px;height:2.400px;border-radius:.7px;background:#1c2233"></div>
<div class="a" style="left:502.300px;top:880.8px;width:2.400px;height:2.400px;border-radius:.7px;background:#1c2233"></div>
<div class="a" style="left:474px;top:899px;width:7px;height:8px;background:linear-gradient(90deg,rgba(90,100,120,0),rgba(90,100,120,.09))"></div>
<div class="a" style="left:474px;top:295px;width:7px;height:4px;background:linear-gradient(90deg,rgba(90,100,120,0),rgba(90,100,120,.09))"></div>
<svg style="left:527px;top:252px" width="10" height="8"><path d="M.4 6.800 L4.600 .6 L8.800 6.800z" fill="#d4d4d4"/></svg>
<div class="a" style="left:527.200px;top:679px;width:8.800px;height:22.700px;border-radius:4.400px;background:#dbdbdb"></div>
<svg style="left:527px;top:896px" width="10" height="8"><path d="M.4 .4 L4.600 6.600 L8.800 .4z" fill="#d4d4d4"/></svg>
<svg style="left:285px;top:910px" width="9" height="10"><path d="M7.600 .4 L.6 4.600 L7.600 8.800z" fill="#d4d4d4"/></svg>
<div class="a" style="left:299px;top:910.600px;width:48px;height:8.200px;border-radius:4px;background:#d9d9d9"></div>
<svg style="left:512px;top:910px" width="9" height="10"><path d="M.6 .4 L7.600 4.600 L.6 8.800z" fill="#d4d4d4"/></svg>
</aside>
<main id="pupil-detail">
<div class="a" id="rpanel" style="left:569px;top:99px;width:1320px;height:843px;border-radius:12px;background:#fff;box-shadow:0 0 2px rgba(140,150,170,.25)"></div>
<div class="a" style="left:589px;top:119px;width:1280px;height:96px;border-radius:7px;background:linear-gradient(90deg,#e8f0f6 0%,#ecedf2 35%,#efebf0 60%,#f4ebee 100%)"></div>
<div class="a" style="left:609px;top:135px;width:64px;height:64px;border-radius:50%;background:#d3e8f4"></div>
<span class="t" style="left:623.46px;top:158.00px;font-size:29px;color:#18a0e0;transform:scaleX(0.8967);transform-origin:0 0;-webkit-text-stroke:.95px #18a0e0;">AA</span>
<span class="t" style="left:700.71px;top:146.00px;font-size:18.4px;color:#151b2c;letter-spacing:0.274px;-webkit-text-stroke:.45px #151b2c;">Adam Adamec</span>
<span class="t" style="left:700.73px;top:173.00px;font-size:14.6px;color:#151b2c;letter-spacing:0.105px;-webkit-text-stroke:.4px #151b2c;">* 15. 9. 2011  (14 let, Muž)</span>
<span class="t" style="left:1248.05px;top:146.00px;font-size:15.4px;color:#5a6772;letter-spacing:0.528px;">obor</span>
<span class="t" style="left:1288.21px;top:146.00px;font-size:14.4px;color:#151b2c;letter-spacing:-0.220px;transform:scaleX(0.9548);transform-origin:0 0;-webkit-text-stroke:.45px currentColor;">ŠVP</span>
<span class="t" style="left:1248.35px;top:170.00px;font-size:15.4px;color:#5a6772;letter-spacing:0.309px;">třída</span>
<span class="t" style="left:1288.21px;top:170.00px;font-size:14.4px;color:#151b2c;letter-spacing:0.185px;-webkit-text-stroke:.45px currentColor;">8.A</span>
<span class="t" style="left:1688.65px;top:146.00px;font-size:15.4px;color:#5a6772;letter-spacing:-0.179px;">číslo v třídním výkazu</span>
<span class="t" style="left:1841.20px;top:146.00px;font-size:14.4px;color:#151b2c;-webkit-text-stroke:.45px currentColor;">1</span>
<span class="t" style="left:1688.65px;top:170.00px;font-size:15.4px;color:#5a6772;letter-spacing:0.189px;">třídní učitel</span>
<span class="t" style="left:1774.93px;top:170.00px;font-size:14.4px;color:#151b2c;letter-spacing:0.141px;-webkit-text-stroke:.45px currentColor;">TrKa</span>
<span class="t" style="left:604.20px;top:238.00px;font-size:14.6px;color:#354254;letter-spacing:0.344px;-webkit-text-stroke:.36px #354254;">Osobní údaje</span>
<span class="t" style="left:731.13px;top:238.00px;font-size:14.6px;color:#354254;letter-spacing:0.338px;-webkit-text-stroke:.36px #354254;">Zákonní zástupci</span>
<span class="t" style="left:882.43px;top:238.00px;font-size:14.6px;color:#354254;letter-spacing:0.231px;-webkit-text-stroke:.36px #354254;">Vzdělávání</span>
<span class="t" style="left:992.20px;top:238.00px;font-size:14.6px;color:#354254;letter-spacing:0.800px;-webkit-text-stroke:.36px #354254;">Matrika</span>
<span class="t" style="left:1080.40px;top:238.00px;font-size:14.6px;color:#354254;letter-spacing:0.442px;-webkit-text-stroke:.36px #354254;">Poznámky</span>
<span class="t" style="left:1188.00px;top:238.00px;font-size:14.6px;color:#354254;letter-spacing:0.724px;-webkit-text-stroke:.36px #354254;">Historie</span>
<span class="t" style="left:1278.30px;top:238.00px;font-size:14.6px;color:#354254;letter-spacing:0.390px;-webkit-text-stroke:.36px #354254;">Průběžná klasifikace</span>
<span class="t" style="left:1455.40px;top:238.00px;font-size:14.6px;color:#354254;letter-spacing:0.392px;-webkit-text-stroke:.36px #354254;">Hodnocení Komens</span>
<span class="t" style="left:1625.43px;top:238.00px;font-size:14.6px;color:#354254;letter-spacing:0.384px;-webkit-text-stroke:.36px #354254;">Výchovná opatření</span>
<div class="a" style="left:1789.500px;top:232px;width:4.400px;height:30px;overflow:hidden">
<span class="t" style="left:0.00px;top:6.00px;font-size:14.6px;color:#354254;">Zdravotní</span>
</div>
<div class="a" style="left:1284.300px;top:261.200px;width:133.400px;height:3.300px;border-radius:1.500px;background:#119fe1"></div>
<svg class="ic" style="left:1808px;top:240px;stroke:#2c3947;stroke-width:1.050" width="14" height="18"><path d="M3.200 2.300 L10.300 8.800 L3.200 15.300"/></svg>
<div class="a" style="left:1844.200px;top:241.6px;width:15px;height:1.800px;border-radius:.9px;background:#2c3947"></div>
<div class="a" style="left:1844.200px;top:246.6px;width:15px;height:1.800px;border-radius:.9px;background:#2c3947"></div>
<div class="a" style="left:1844.200px;top:251.6px;width:15px;height:1.800px;border-radius:.9px;background:#2c3947"></div>
<div class="a" style="left:860.300px;top:282px;width:1008.500px;height:145px;overflow:hidden">
<div class="a" style="left:0.00px;top:0;width:56.060px;height:145px;background:#f8f9fb"></div>
<div class="a" style="left:112.12px;top:0;width:56.060px;height:145px;background:#f8f9fb"></div>
<div class="a" style="left:224.24px;top:0;width:56.060px;height:72px;background:#f8f9fb"></div>
<div class="a" style="left:336.36px;top:0;width:56.060px;height:72px;background:#f8f9fb"></div>
<div class="a" style="left:448.48px;top:0;width:56.060px;height:72px;background:#f8f9fb"></div>
<div class="a" style="left:560.60px;top:0;width:56.060px;height:72px;background:#f8f9fb"></div>
<div class="a" style="left:672.72px;top:0;width:56.060px;height:72px;background:#f8f9fb"></div>
<div class="a" style="left:784.84px;top:0;width:56.060px;height:72px;background:#f8f9fb"></div>
<div class="a" style="left:896.96px;top:0;width:56.060px;height:72px;background:#f8f9fb"></div>
<div class="a" style="left:1009.08px;top:0;width:56.060px;height:72px;background:#f8f9fb"></div>
</div>
<div class="a" style="left:589px;top:354px;width:1280px;height:1px;background:#eceef1"></div>
<span class="t" style="left:598.41px;top:295.00px;font-size:14.4px;font-weight:bold;color:#151b2c;letter-spacing:0.565px;">Matematika</span>
<div class="a" style="left:784.300px;top:292px;width:25.700px;height:24px;border-radius:5px;background:#e5f898"></div>
<span class="t" style="left:789.24px;top:295.00px;font-size:15.2px;font-weight:bold;color:#10381c;letter-spacing:0.800px;transform:scaleX(1.0268);transform-origin:0 0;">1-</span>
<span class="t" style="left:826.06px;top:294.00px;font-size:11.6px;color:#465666;letter-spacing:0.295px;">1,35</span>
<div class="a" style="left:834.300px;top:328px;width:15.700px;height:15.700px;border-radius:4px;background:#dee8ee"></div>
<svg class="ic" style="left:834.300px;top:328px;stroke:#9db0bb;stroke-width:1" width="16" height="16"><path d="M7.850 3 v9.700 M3 7.850 h9.700"/></svg>
<span class="t" style="left:598.41px;top:368.00px;font-size:14.4px;font-weight:bold;color:#151b2c;letter-spacing:0.140px;">Fyzika</span>
<div class="a" style="left:784.300px;top:365px;width:25.700px;height:24px;border-radius:5px;background:#f6f78c"></div>
<span class="t" style="left:792.87px;top:368.00px;font-size:15.2px;font-weight:bold;color:#10381c;">2</span>
<span class="t" style="left:826.06px;top:367.00px;font-size:11.6px;color:#465666;letter-spacing:0.295px;">2,06</span>
<div class="a" style="left:834.300px;top:401.300px;width:15.700px;height:15.700px;border-radius:4px;background:#dee8ee"></div>
<svg class="ic" style="left:834.300px;top:401.300px;stroke:#9db0bb;stroke-width:1" width="16" height="16"><path d="M3 7.850 h9.700"/></svg>
<div class="a" style="left:860.300px;top:282px;width:1008.500px;height:146px;overflow:hidden">
<span class="t" style="left:23.15px;top:27.00px;font-size:17.8px;color:#151b2c;">2</span>
<span class="t" style="left:24.63px;top:54.00px;font-size:10.4px;color:#6f8795;">A</span>
<div class="a" style="left:48.6px;top:64.25px;width:5px;height:4.65px;background:#a9c6d2"></div><div class="a" style="left:48.6px;top:58.25px;width:5px;height:4.35px;background:#a9c6d2"></div><div class="a" style="left:48.6px;top:53.10px;width:5px;height:3.65px;background:#a9c6d2"></div>
<span class="t" style="left:79.18px;top:27.00px;font-size:17.8px;color:#151b2c;">1</span>
<span class="t" style="left:80.66px;top:54.00px;font-size:10.4px;color:#6f8795;">A</span>
<div class="a" style="left:104.62px;top:64.25px;width:5px;height:4.65px;background:#a9c6d2"></div><div class="a" style="left:104.62px;top:58.25px;width:5px;height:4.35px;background:#a9c6d2"></div><div class="a" style="left:104.62px;top:53.10px;width:5px;height:3.65px;background:#a9c6d2"></div>
<span class="t" style="left:135.21px;top:27.00px;font-size:17.8px;color:#151b2c;">1</span>
<span class="t" style="left:136.69px;top:54.00px;font-size:10.4px;color:#6f8795;">A</span>
<div class="a" style="left:160.64000000000001px;top:64.25px;width:5px;height:4.65px;background:#a9c6d2"></div><div class="a" style="left:160.64000000000001px;top:58.25px;width:5px;height:4.35px;background:#a9c6d2"></div><div class="a" style="left:160.64000000000001px;top:53.10px;width:5px;height:3.65px;background:#a9c6d2"></div>
<span class="t" style="left:191.24px;top:27.00px;font-size:17.8px;color:#151b2c;">2</span>
<span class="t" style="left:192.72px;top:54.00px;font-size:10.4px;color:#6f8795;">A</span>
<div class="a" style="left:216.66px;top:64.25px;width:5px;height:4.65px;background:#a9c6d2"></div><div class="a" style="left:216.66px;top:58.25px;width:5px;height:4.35px;background:#a9c6d2"></div><div class="a" style="left:216.66px;top:53.10px;width:5px;height:3.65px;background:#a9c6d2"></div>
<span class="t" style="left:247.27px;top:27.00px;font-size:17.8px;color:#151b2c;">1</span>
<span class="t" style="left:248.75px;top:54.00px;font-size:10.4px;color:#6f8795;">A</span>
<div class="a" style="left:272.68px;top:64.25px;width:5px;height:4.65px;background:#a9c6d2"></div><div class="a" style="left:272.68px;top:58.25px;width:5px;height:4.35px;background:#a9c6d2"></div><div class="a" style="left:272.68px;top:53.10px;width:5px;height:3.65px;background:#a9c6d2"></div>
<span class="t" style="left:303.30px;top:27.00px;font-size:17.8px;color:#151b2c;">2</span>
<span class="t" style="left:304.78px;top:54.00px;font-size:10.4px;color:#6f8795;">A</span>
<div class="a" style="left:328.70000000000005px;top:64.25px;width:5px;height:4.65px;background:#a9c6d2"></div><div class="a" style="left:328.70000000000005px;top:58.25px;width:5px;height:4.35px;background:#a9c6d2"></div><div class="a" style="left:328.70000000000005px;top:53.10px;width:5px;height:3.65px;background:#a9c6d2"></div>
<span class="t" style="left:359.33px;top:27.00px;font-size:17.8px;color:#151b2c;">1</span>
<span class="t" style="left:360.81px;top:54.00px;font-size:10.4px;color:#6f8795;">A</span>
<div class="a" style="left:384.72px;top:64.25px;width:5px;height:4.65px;background:#a9c6d2"></div><div class="a" style="left:384.72px;top:58.25px;width:5px;height:4.35px;background:#a9c6d2"></div><div class="a" style="left:384.72px;top:53.10px;width:5px;height:3.65px;background:#a9c6d2"></div>
<span class="t" style="left:415.36px;top:27.00px;font-size:17.8px;color:#151b2c;">2</span>
<span class="t" style="left:416.84px;top:54.00px;font-size:10.4px;color:#6f8795;">A</span>
<div class="a" style="left:440.74000000000007px;top:64.25px;width:5px;height:4.65px;background:#a9c6d2"></div><div class="a" style="left:440.74000000000007px;top:58.25px;width:5px;height:4.35px;background:#a9c6d2"></div><div class="a" style="left:440.74000000000007px;top:53.10px;width:5px;height:3.65px;background:#a9c6d2"></div>
<span class="t" style="left:471.39px;top:27.00px;font-size:17.8px;color:#151b2c;">1</span>
<span class="t" style="left:472.87px;top:54.00px;font-size:10.4px;color:#6f8795;">A</span>
<div class="a" style="left:496.76000000000005px;top:64.25px;width:5px;height:4.65px;background:#a9c6d2"></div><div class="a" style="left:496.76000000000005px;top:58.25px;width:5px;height:4.35px;background:#a9c6d2"></div><div class="a" style="left:496.76000000000005px;top:53.10px;width:5px;height:3.65px;background:#a9c6d2"></div>
<span class="t" style="left:527.42px;top:27.00px;font-size:17.8px;color:#151b2c;">1</span>
<span class="t" style="left:528.90px;top:54.00px;font-size:10.4px;color:#6f8795;">A</span>
<div class="a" style="left:552.78px;top:64.25px;width:5px;height:4.65px;background:#a9c6d2"></div><div class="a" style="left:552.78px;top:58.25px;width:5px;height:4.35px;background:#a9c6d2"></div><div class="a" style="left:552.78px;top:53.10px;width:5px;height:3.65px;background:#a9c6d2"></div>
<span class="t" style="left:583.45px;top:27.00px;font-size:17.8px;color:#151b2c;">1</span>
<span class="t" style="left:584.93px;top:54.00px;font-size:10.4px;color:#6f8795;">A</span>
<div class="a" style="left:608.8000000000001px;top:64.25px;width:5px;height:4.65px;background:#a9c6d2"></div><div class="a" style="left:608.8000000000001px;top:58.25px;width:5px;height:4.35px;background:#a9c6d2"></div><div class="a" style="left:608.8000000000001px;top:53.10px;width:5px;height:3.65px;background:#a9c6d2"></div>
<span class="t" style="left:639.48px;top:27.00px;font-size:17.8px;color:#151b2c;">1</span>
<span class="t" style="left:640.96px;top:54.00px;font-size:10.4px;color:#6f8795;">A</span>
<div class="a" style="left:664.82px;top:64.25px;width:5px;height:4.65px;background:#a9c6d2"></div><div class="a" style="left:664.82px;top:58.25px;width:5px;height:4.35px;background:#a9c6d2"></div><div class="a" style="left:664.82px;top:53.10px;width:5px;height:3.65px;background:#a9c6d2"></div>
<span class="t" style="left:695.51px;top:27.00px;font-size:17.8px;color:#151b2c;">1</span>
<span class="t" style="left:696.99px;top:54.00px;font-size:10.4px;color:#6f8795;">A</span>
<div class="a" style="left:720.84px;top:64.25px;width:5px;height:4.65px;background:#a9c6d2"></div><div class="a" style="left:720.84px;top:58.25px;width:5px;height:4.35px;background:#a9c6d2"></div><div class="a" style="left:720.84px;top:53.10px;width:5px;height:3.65px;background:#a9c6d2"></div>
<span class="t" style="left:751.54px;top:27.00px;font-size:17.8px;color:#151b2c;">1</span>
<span class="t" style="left:753.02px;top:54.00px;font-size:10.4px;color:#6f8795;">A</span>
<div class="a" style="left:776.86px;top:64.25px;width:5px;height:4.65px;background:#a9c6d2"></div><div class="a" style="left:776.86px;top:58.25px;width:5px;height:4.35px;background:#a9c6d2"></div><div class="a" style="left:776.86px;top:53.10px;width:5px;height:3.65px;background:#a9c6d2"></div>
<span class="t" style="left:807.57px;top:27.00px;font-size:17.8px;color:#151b2c;">2</span>
<span class="t" style="left:809.05px;top:54.00px;font-size:10.4px;color:#6f8795;">A</span>
<div class="a" style="left:832.8800000000001px;top:64.25px;width:5px;height:4.65px;background:#a9c6d2"></div><div class="a" style="left:832.8800000000001px;top:58.25px;width:5px;height:4.35px;background:#a9c6d2"></div><div class="a" style="left:832.8800000000001px;top:53.10px;width:5px;height:3.65px;background:#a9c6d2"></div>
<span class="t" style="left:863.60px;top:27.00px;font-size:17.8px;color:#151b2c;">1</span>
<span class="t" style="left:865.08px;top:54.00px;font-size:10.4px;color:#6f8795;">A</span>
<div class="a" style="left:888.9000000000001px;top:64.25px;width:5px;height:4.65px;background:#a9c6d2"></div><div class="a" style="left:888.9000000000001px;top:58.25px;width:5px;height:4.35px;background:#a9c6d2"></div><div class="a" style="left:888.9000000000001px;top:53.10px;width:5px;height:3.65px;background:#a9c6d2"></div>
<span class="t" style="left:919.63px;top:27.00px;font-size:17.8px;color:#151b2c;">1</span>
<span class="t" style="left:921.11px;top:54.00px;font-size:10.4px;color:#6f8795;">A</span>
<div class="a" style="left:944.9200000000001px;top:64.25px;width:5px;height:4.65px;background:#a9c6d2"></div><div class="a" style="left:944.9200000000001px;top:58.25px;width:5px;height:4.35px;background:#a9c6d2"></div><div class="a" style="left:944.9200000000001px;top:53.10px;width:5px;height:3.65px;background:#a9c6d2"></div>
<span class="t" style="left:975.66px;top:27.00px;font-size:17.8px;color:#151b2c;">2</span>
<span class="t" style="left:977.14px;top:54.00px;font-size:10.4px;color:#6f8795;">A</span>
<div class="a" style="left:1000.94px;top:64.25px;width:5px;height:4.65px;background:#a9c6d2"></div><div class="a" style="left:1000.94px;top:58.25px;width:5px;height:4.35px;background:#a9c6d2"></div><div class="a" style="left:1000.94px;top:53.10px;width:5px;height:3.65px;background:#a9c6d2"></div>
<span class="t" style="left:23.15px;top:100.00px;font-size:17.8px;color:#151b2c;">3</span>
<span class="t" style="left:24.63px;top:127.00px;font-size:10.4px;color:#6f8795;">A</span>
<div class="a" style="left:48.6px;top:137.25px;width:5px;height:4.65px;background:#a9c6d2"></div><div class="a" style="left:48.6px;top:131.25px;width:5px;height:4.35px;background:#a9c6d2"></div><div class="a" style="left:48.6px;top:126.10px;width:5px;height:3.65px;background:#a9c6d2"></div>
<span class="t" style="left:79.18px;top:100.00px;font-size:17.8px;color:#151b2c;">2</span>
<span class="t" style="left:80.95px;top:127.00px;font-size:10.4px;color:#6f8795;">F</span>
<div class="a" style="left:104.62px;top:137.25px;width:5px;height:4.65px;background:#a9c6d2"></div><div class="a" style="left:104.62px;top:131.25px;width:5px;height:4.35px;background:#a9c6d2"></div>
<span class="t" style="left:135.21px;top:100.00px;font-size:17.8px;color:#151b2c;">2</span>
<span class="t" style="left:136.69px;top:127.00px;font-size:10.4px;color:#6f8795;">A</span>
<div class="a" style="left:160.64000000000001px;top:137.25px;width:5px;height:4.65px;background:#a9c6d2"></div><div class="a" style="left:160.64000000000001px;top:131.25px;width:5px;height:4.35px;background:#a9c6d2"></div><div class="a" style="left:160.64000000000001px;top:126.10px;width:5px;height:3.65px;background:#a9c6d2"></div>
<span class="t" style="left:191.24px;top:100.00px;font-size:17.8px;color:#151b2c;">1</span>
<span class="t" style="left:192.43px;top:127.00px;font-size:10.4px;color:#6f8795;">C</span>
<div class="a" style="left:216.66px;top:137.25px;width:5px;height:4.65px;background:#a9c6d2"></div><div class="a" style="left:216.66px;top:131.25px;width:5px;height:4.35px;background:#a9c6d2"></div><div class="a" style="left:216.66px;top:126.10px;width:5px;height:3.65px;background:#a9c6d2"></div>
</div>
<div class="a" style="left:589px;top:427px;width:1280px;height:41px;background:#f2f3f5"></div>
<div class="a" style="left:589px;top:468px;width:1280px;height:40px;background:#fff"></div>
<div class="a" style="left:589px;top:508px;width:1280px;height:40px;background:#f7f8fa"></div>
<div class="a" style="left:589px;top:548px;width:1280px;height:40px;background:#fff"></div>
<div class="a" style="left:589px;top:588px;width:1280px;height:40px;background:#f7f8fa"></div>
<div class="a" style="left:589px;top:508px;width:1280px;height:1px;background:#edeff2"></div>
<div class="a" style="left:589px;top:548px;width:1280px;height:1px;background:#edeff2"></div>
<div class="a" style="left:589px;top:588px;width:1280px;height:1px;background:#edeff2"></div>
<div class="a" style="left:589px;top:628px;width:1280px;height:1px;background:#edeff2"></div>
<span class="t" style="left:596.28px;top:439.00px;font-size:13px;letter-spacing:0.212px;">Hodnocení</span>
<span class="t" style="left:676.93px;top:439.00px;font-size:13px;letter-spacing:0.331px;">Titulek</span>
<span class="t" style="left:811.78px;top:439.00px;font-size:13px;letter-spacing:0.241px;">Datum</span>
<span class="t" style="left:1024.43px;top:439.00px;font-size:13px;letter-spacing:-0.220px;transform:scaleX(0.9714);transform-origin:0 0;">Váha</span>
<span class="t" style="left:1114.13px;top:439.00px;font-size:13px;letter-spacing:0.160px;">Typ</span>
<span class="t" style="left:1180.43px;top:439.00px;font-size:13px;letter-spacing:-0.220px;transform:scaleX(0.9782);transform-origin:0 0;">Téma</span>
<span class="t" style="left:1265.73px;top:439.00px;font-size:13px;letter-spacing:-0.064px;">Zapsal</span>
<span class="t" style="left:1562.43px;top:439.00px;font-size:13px;letter-spacing:-0.023px;">Zapsáno dne</span>
<span class="t" style="left:1746.09px;top:439.00px;font-size:13px;">Pořadí ve třídě</span>
<span class="t" style="left:596.05px;top:478.00px;font-size:17.2px;color:#151b2c;">3</span>
<span class="t" style="left:676.94px;top:479.00px;font-size:12.8px;color:#151b2c;letter-spacing:0.210px;-webkit-text-stroke:.45px currentColor;">4. sloupec</span>
<span class="t" style="left:811.78px;top:479.00px;font-size:13px;letter-spacing:-0.211px;">18. 11. 2025</span>
<span class="t" style="left:1023.78px;top:479.00px;font-size:13px;letter-spacing:0.016px;">10</span>
<div class="a" style="left:1054.2px;top:491.15px;width:5px;height:4.65px;background:#a9c6d2"></div><div class="a" style="left:1054.2px;top:485.15px;width:5px;height:4.35px;background:#a9c6d2"></div><div class="a" style="left:1054.2px;top:480.00px;width:5px;height:3.65px;background:#a9c6d2"></div>
<span class="t" style="left:1114.20px;top:479.00px;font-size:13px;">A</span>
<span class="t" style="left:1265.09px;top:479.00px;font-size:13px;letter-spacing:-0.094px;">Mgr. Josef Nový</span>
<span class="t" style="left:1561.79px;top:479.00px;font-size:13px;letter-spacing:-0.220px;transform:scaleX(0.9977);transform-origin:0 0;">9. 12. 2025</span>
<div class="a" style="left:1740px;top:467px;width:129px;height:40px;overflow:hidden">
<span class="t" style="left:6.08px;top:12.00px;font-size:13px;letter-spacing:-0.220px;transform:scaleX(0.9577);transform-origin:0 0;">10. - 18. (∑ 19, ø 2,47)</span>
</div>
<span class="t" style="left:596.05px;top:518.00px;font-size:17.2px;color:#151b2c;">2</span>
<span class="t" style="left:676.30px;top:519.00px;font-size:12.8px;color:#151b2c;letter-spacing:0.274px;-webkit-text-stroke:.45px currentColor;">3. sloupec</span>
<span class="t" style="left:811.78px;top:519.00px;font-size:13px;letter-spacing:-0.220px;transform:scaleX(0.9877);transform-origin:0 0;">13. 10. 2025</span>
<span class="t" style="left:1024.50px;top:519.00px;font-size:13px;">5</span>
<div class="a" style="left:1047px;top:523.00px;width:5px;height:4.6px;background:#a9c6d2"></div><div class="a" style="left:1047px;top:528.60px;width:5px;height:4.1px;background:#a9c6d2"></div>
<span class="t" style="left:1114.20px;top:519.00px;font-size:13px;">F</span>
<span class="t" style="left:1265.09px;top:519.00px;font-size:13px;letter-spacing:-0.094px;">Mgr. Josef Nový</span>
<span class="t" style="left:1561.79px;top:519.00px;font-size:13px;letter-spacing:-0.220px;transform:scaleX(0.9977);transform-origin:0 0;">9. 12. 2025</span>
<div class="a" style="left:1740px;top:507px;width:129px;height:40px;overflow:hidden">
<span class="t" style="left:6.08px;top:12.00px;font-size:13px;letter-spacing:-0.220px;transform:scaleX(0.9438);transform-origin:0 0;">1. - 19. (∑ 19, ø 2)</span>
</div>
<span class="t" style="left:596.05px;top:558.00px;font-size:17.2px;color:#151b2c;">2</span>
<span class="t" style="left:676.30px;top:559.00px;font-size:12.8px;color:#151b2c;letter-spacing:0.274px;-webkit-text-stroke:.45px currentColor;">2. sloupec</span>
<span class="t" style="left:811.78px;top:559.00px;font-size:13px;letter-spacing:-0.220px;transform:scaleX(0.9866);transform-origin:0 0;">6. 10. 2025</span>
<span class="t" style="left:1023.78px;top:559.00px;font-size:13px;letter-spacing:0.016px;">10</span>
<div class="a" style="left:1054.2px;top:571.15px;width:5px;height:4.65px;background:#a9c6d2"></div><div class="a" style="left:1054.2px;top:565.15px;width:5px;height:4.35px;background:#a9c6d2"></div><div class="a" style="left:1054.2px;top:560.00px;width:5px;height:3.65px;background:#a9c6d2"></div>
<span class="t" style="left:1114.20px;top:559.00px;font-size:13px;">A</span>
<span class="t" style="left:1265.09px;top:559.00px;font-size:13px;letter-spacing:-0.094px;">Mgr. Josef Nový</span>
<span class="t" style="left:1561.79px;top:559.00px;font-size:13px;letter-spacing:-0.169px;">19. 11. 2025</span>
<div class="a" style="left:1740px;top:547px;width:129px;height:40px;overflow:hidden">
<span class="t" style="left:6.08px;top:12.00px;font-size:13px;letter-spacing:-0.220px;transform:scaleX(0.9438);transform-origin:0 0;">1. - 21. (∑ 21, ø 2)</span>
</div>
<span class="t" style="left:596.05px;top:598.00px;font-size:17.2px;color:#151b2c;">1</span>
<span class="t" style="left:676.30px;top:599.00px;font-size:12.8px;color:#151b2c;letter-spacing:0.274px;-webkit-text-stroke:.45px currentColor;">1. sloupec</span>
<span class="t" style="left:811.78px;top:599.00px;font-size:13px;letter-spacing:-0.220px;transform:scaleX(0.9866);transform-origin:0 0;">15. 9. 2025</span>
<span class="t" style="left:1024.50px;top:599.00px;font-size:13px;">8</span>
<div class="a" style="left:1047px;top:611.15px;width:5px;height:4.65px;background:#a9c6d2"></div><div class="a" style="left:1047px;top:605.15px;width:5px;height:4.35px;background:#a9c6d2"></div><div class="a" style="left:1047px;top:600.00px;width:5px;height:3.65px;background:#a9c6d2"></div>
<span class="t" style="left:1114.20px;top:599.00px;font-size:13px;">C</span>
<span class="t" style="left:1561.79px;top:599.00px;font-size:13px;letter-spacing:-0.169px;">19. 11. 2025</span>
<div class="a" style="left:1740px;top:587px;width:129px;height:40px;overflow:hidden">
<span class="t" style="left:6.08px;top:12.00px;font-size:13px;letter-spacing:-0.220px;transform:scaleX(0.9528);transform-origin:0 0;">1. - 15. (∑ 22, ø 1,16)</span>
</div>
<svg style="left:593px;top:633px" width="9" height="10"><path d="M7.600 .4 L.6 4.600 L7.600 8.800z" fill="#d4d4d4"/></svg>
<div class="a" style="left:607px;top:633.300px;width:1144.800px;height:8.400px;border-radius:4.200px;background:#d9d9d9"></div>
<svg style="left:1857px;top:633px" width="9" height="10"><path d="M.6 .4 L7.600 4.600 L.6 8.800z" fill="#d4d4d4"/></svg>
<div class="a" style="left:569px;top:877px;width:1320px;height:1px;background:#e2e6ea"></div>
<div class="btn" style="left:593.200px;top:890px;width:121.500px;height:39.700px"></div>
<svg class="ic" style="left:608px;top:902px;stroke:#1c2233;stroke-width:1.1" width="16" height="16"><path d="M1.800 2 L14 14.200 M14 2 L1.800 14.200"/></svg>
<span class="t" style="left:631.84px;top:901.00px;font-size:12.8px;letter-spacing:0.429px;-webkit-text-stroke:.45px currentColor;">Zavřít detail</span>
<div class="btn" style="left:1177.300px;top:890px;width:103.500px;height:39.700px"></div>
<div class="a" style="left:1193.200px;top:904.8px;width:13.600px;height:1.200px;background:#1c2233"></div>
<div class="a" style="left:1193.200px;top:909.5px;width:13.600px;height:1.200px;background:#1c2233"></div>
<div class="a" style="left:1193.200px;top:914.2px;width:13.600px;height:1.200px;background:#1c2233"></div>
<span class="t" style="left:1215.50px;top:901.00px;font-size:12.8px;letter-spacing:0.445px;-webkit-text-stroke:.45px currentColor;">Možnosti</span>
<div class="btn" style="left:1765.300px;top:890px;width:99.500px;height:39.700px"></div>
<svg class="ic" style="left:1780px;top:901px;stroke:#b3bcc4;stroke-width:1.25" width="18" height="18"><path d="M6.500 3.200 H3.500 Q1.300 3.200 1.300 5.400 V14.200 Q1.300 16.400 3.500 16.400 H12.400 Q14.600 16.400 14.600 14.200 V10.500"/><path d="M6.300 10.900 L7.300 7.800 L13.300 1.900 Q14.200 1.100 15.100 1.900 L15.400 2.200 Q16.200 3.100 15.400 4 L9.400 9.900 Z M7.300 7.800 L9.400 9.900"/></svg>
<span class="t" style="left:1804.00px;top:901.00px;font-size:12.8px;color:#a9b4bd;letter-spacing:0.579px;-webkit-text-stroke:.45px currentColor;">Editovat</span>
</main>
</body></html>
